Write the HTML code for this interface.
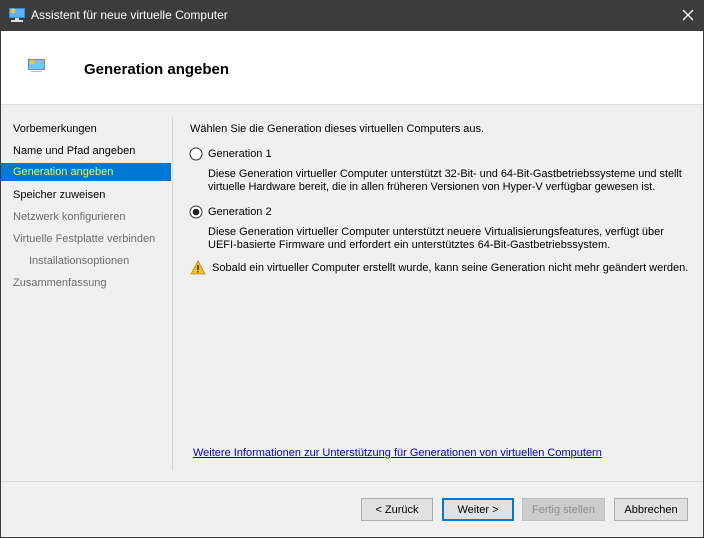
<!DOCTYPE html>
<html><head><meta charset="utf-8"><style>
*{margin:0;padding:0;box-sizing:border-box}
body{width:704px;height:538px;overflow:hidden;background:#f0f0f0;font-family:"Liberation Sans",Arial,sans-serif;font-size:11px;color:#000;position:relative}
.a{position:absolute;white-space:nowrap}
#frame{position:absolute;left:0;top:0;width:704px;height:538px;border:1px solid #3c3c3c;border-top:none}
#title{position:absolute;left:0;top:0;width:704px;height:31px;background:#3c3c3c;color:#fff;font-size:12px}
#hdr{position:absolute;left:1px;top:31px;width:702px;height:74px;background:#fff;border-bottom:1px solid #dcdcdc}
.nav{position:absolute;left:13px;font-size:11px}
.dis{color:#6d6d6d}
.btn{position:absolute;top:498px;height:23px;border:1px solid #adadad;background:#e1e1e1;text-align:center;line-height:22px;font-size:11px}
</style></head><body>
<div id="title">
<svg class="a" style="left:8px;top:7px" width="18" height="16" viewBox="0 0 18 16"><rect x="1" y="1" width="16" height="10" fill="#2f8fe8"/><rect x="2" y="2" width="14" height="8" fill="#5bb2f5"/><circle cx="5" cy="4" r="2.5" fill="#f7c33a"/><rect x="7" y="11" width="4" height="2" fill="#ddd"/><rect x="3" y="13" width="12" height="2" fill="#ddd"/></svg>
<div class="a" style="left:31px;top:8px">Assistent für neue virtuelle Computer</div>
<svg class="a" style="left:682px;top:9px" width="12" height="12"><path d="M1 1L11 11M11 1L1 11" stroke="#fff" stroke-width="1.3"/></svg>
</div>
<div id="hdr">
<svg class="a" style="left:27px;top:28px" width="17" height="14" viewBox="0 0 17 14"><rect x="0" y="0" width="17" height="11" fill="#3c96e6"/><rect x="1" y="1" width="15" height="9" fill="#7cc2f6"/><circle cx="4" cy="3" r="2.5" fill="#f7c33a"/><rect x="3" y="12" width="11" height="1" fill="#bbb"/></svg>
<div class="a" style="left:83px;top:30px;font-size:15px;font-weight:bold">Generation angeben</div>
</div>
<div class="nav a" style="top:123px">Vorbemerkungen</div>
<div class="nav a" style="top:145px">Name und Pfad angeben</div>
<div class="a" style="left:1px;top:163px;width:170px;height:18px;background:#0078d7"></div>
<div class="nav a" style="top:166px;color:#d8ff4a">Generation angeben</div>
<div class="nav a" style="top:189px">Speicher zuweisen</div>
<div class="nav a dis" style="top:211px">Netzwerk konfigurieren</div>
<div class="nav a dis" style="top:233px">Virtuelle Festplatte verbinden</div>
<div class="nav a dis" style="top:255px;left:29px">Installationsoptionen</div>
<div class="nav a dis" style="top:277px">Zusammenfassung</div>
<div class="a" style="left:172px;top:117px;width:1px;height:353px;background:#d5d5d5"></div>
<div class="a" style="left:190px;top:123px">Wählen Sie die Generation dieses virtuellen Computers aus.</div>
<svg class="a" style="left:189px;top:147px" width="14" height="14"><circle cx="7" cy="7" r="6" fill="#fff" stroke="#333" stroke-width="1"/></svg>
<div class="a" style="left:208px;top:148px">Generation 1</div>
<div class="a" style="left:208px;top:168px;line-height:13px;letter-spacing:-0.05px">Diese Generation virtueller Computer unterstützt 32-Bit- und 64-Bit-Gastbetriebssysteme und stellt<br>virtuelle Hardware bereit, die in allen früheren Versionen von Hyper-V verfügbar gewesen ist.</div>
<svg class="a" style="left:189px;top:205px" width="14" height="14"><circle cx="7" cy="7" r="6" fill="#fff" stroke="#333" stroke-width="1"/><circle cx="7" cy="7" r="3.3" fill="#222"/></svg>
<div class="a" style="left:208px;top:206px">Generation 2</div>
<div class="a" style="left:208px;top:226px;line-height:13px">Diese Generation virtueller Computer unterstützt neuere Virtualisierungsfeatures, verfügt über<br>UEFI-basierte Firmware und erfordert ein unterstütztes 64-Bit-Gastbetriebssystem.</div>
<svg class="a" style="left:190px;top:260px" width="16" height="15" viewBox="0 0 16 15"><path d="M8 1L15 14H1Z" fill="#f2c028" stroke="#b88a10" stroke-width="0.8"/><rect x="7.3" y="5" width="1.4" height="5" fill="#222"/><rect x="7.3" y="11" width="1.4" height="1.4" fill="#222"/></svg>
<div class="a" style="left:212px;top:262px">Sobald ein virtueller Computer erstellt wurde, kann seine Generation nicht mehr geändert werden.</div>
<div class="a" style="left:193px;top:447px;color:#0000cc;text-decoration:underline">Weitere Informationen zur Unterstützung für Generationen von virtuellen Computern</div>
<div class="a" style="left:1px;top:481px;width:702px;height:1px;background:#dadada"></div>
<div class="btn" style="left:361px;width:72px">&lt; Zurück</div>
<div class="btn" style="left:442px;width:72px;border:2px solid #0078d7;line-height:20px">Weiter &gt;</div>
<div class="btn" style="left:522px;width:83px;background:#cccccc;border-color:#bfbfbf;color:#8d8d8d">Fertig stellen</div>
<div class="btn" style="left:614px;width:74px">Abbrechen</div>
<div id="frame"></div>
</body></html>
